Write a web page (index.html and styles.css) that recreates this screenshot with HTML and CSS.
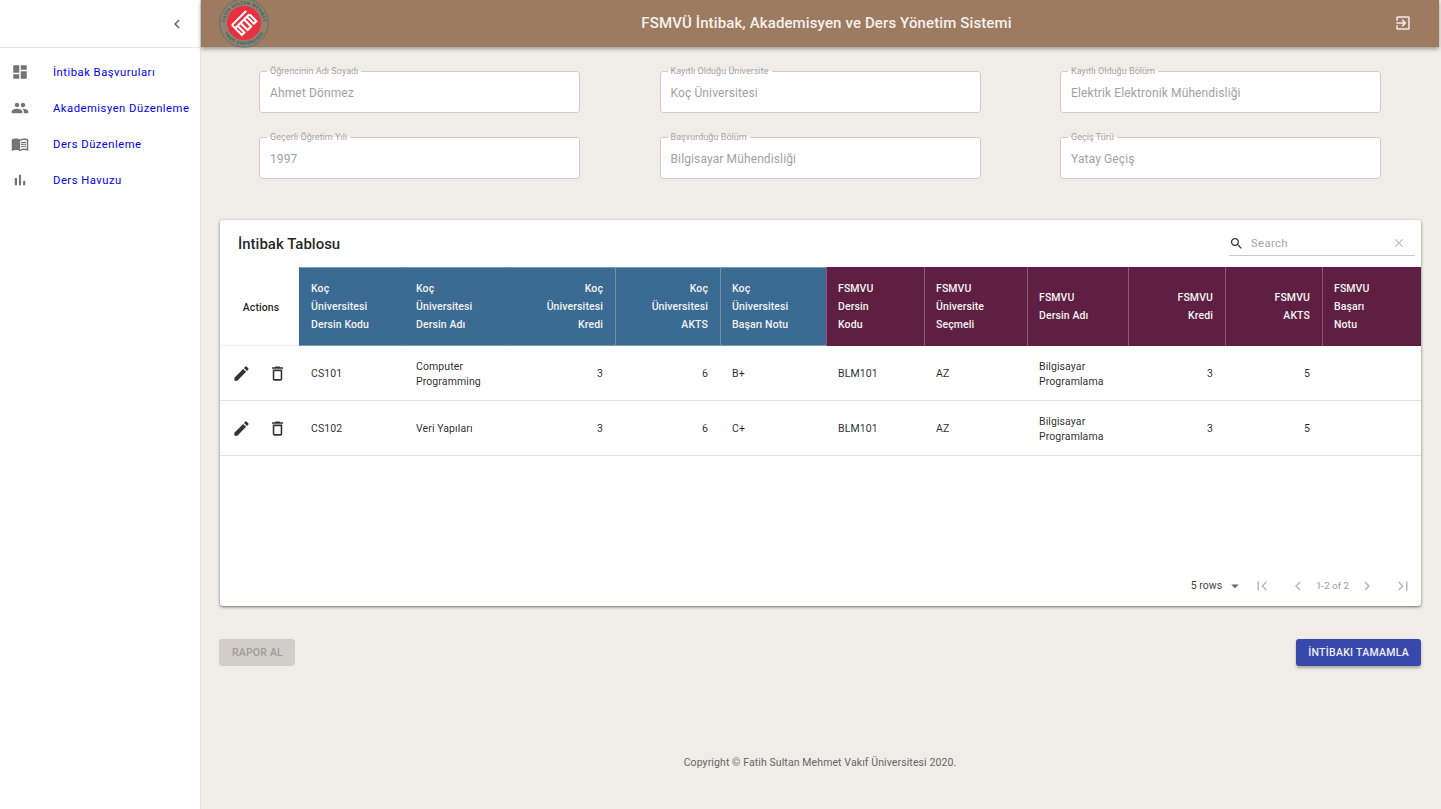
FILE: index.html
```html
<!DOCTYPE html>
<html lang="tr">
<head>
<meta charset="utf-8">
<title>FSMVÜ İntibak</title>
<link rel="stylesheet" href="styles.css">
</head>
<body>
<svg class="sprite" width="0" height="0">
  <defs>
    <symbol id="i-dash" viewBox="0 0 24 24"><path d="M3 13h8V3H3v10zm0 8h8v-6H3v6zm10 0h8V11h-8v10zm0-18v6h8V3h-8z"/></symbol>
    <symbol id="i-people" viewBox="0 0 24 24"><path d="M16 11c1.66 0 2.99-1.34 2.99-3S17.66 5 16 5c-1.66 0-3 1.34-3 3s1.34 3 3 3zm-8 0c1.66 0 2.99-1.34 2.99-3S9.66 5 8 5C6.34 5 5 6.34 5 8s1.34 3 3 3zm0 2c-2.33 0-7 1.17-7 3.5V19h14v-2.5c0-2.33-4.67-3.5-7-3.5zm8 0c-.29 0-.62.02-.97.05 1.16.84 1.97 1.97 1.97 3.45V19h6v-2.5c0-2.33-4.67-3.5-7-3.5z"/></symbol>
    <symbol id="i-book" viewBox="0 0 24 24"><path d="M21 5c-1.11-.35-2.33-.5-3.5-.5-1.95 0-4.05.4-5.5 1.5-1.45-1.1-3.55-1.5-5.5-1.5S2.45 4.9 1 6v14.65c0 .25.25.5.5.5.1 0 .15-.05.25-.05C3.1 20.45 5.05 20 6.5 20c1.95 0 4.05.4 5.5 1.5 1.35-.85 3.8-1.5 5.5-1.5 1.65 0 3.35.3 4.75 1.05.1.05.15.05.25.05.25 0 .5-.25.5-.5V6c-.6-.45-1.25-.75-2-1zm0 13.5c-1.1-.35-2.3-.5-3.5-.5-1.7 0-4.15.65-5.5 1.5V8c1.35-.85 3.8-1.5 5.5-1.5 1.2 0 2.4.15 3.5.5v11.5z"/><path d="M17.5 10.5c.88 0 1.73.09 2.5.26V9.24c-.79-.15-1.64-.24-2.5-.24-1.7 0-3.24.29-4.5.83v1.66c1.13-.64 2.7-.99 4.5-.99zM13 12.49v1.66c1.13-.64 2.7-.99 4.5-.99.88 0 1.73.09 2.5.26V11.9c-.79-.15-1.64-.24-2.5-.24-1.7 0-3.24.3-4.5.83zM17.5 14.33c-1.7 0-3.24.29-4.5.83v1.66c1.13-.64 2.7-.99 4.5-.99.88 0 1.73.09 2.5.26v-1.52c-.79-.16-1.64-.24-2.5-.24z"/></symbol>
    <symbol id="i-bar" viewBox="0 0 24 24"><path d="M5 9.2h3V19H5zM10.6 5h2.8v14h-2.8zm5.6 8H19v6h-2.8z"/></symbol>
    <symbol id="i-left" viewBox="0 0 24 24"><path d="M15.41 7.41L14 6l-6 6 6 6 1.41-1.41L10.83 12z"/></symbol>
    <symbol id="i-right" viewBox="0 0 24 24"><path d="M8.59 16.59L13.17 12 8.59 7.41 10 6l6 6-6 6z"/></symbol>
    <symbol id="i-edit" viewBox="0 0 24 24"><path d="M3 17.25V21h3.75L17.81 9.94l-3.75-3.75L3 17.25zM20.71 7.04c.39-.39.39-1.02 0-1.41l-2.34-2.34c-.39-.39-1.02-.39-1.41 0l-1.83 1.83 3.75 3.75 1.83-1.83z"/></symbol>
    <symbol id="i-trash" viewBox="0 0 24 24"><path d="M6 19c0 1.1.9 2 2 2h8c1.1 0 2-.9 2-2V7H6v12zM8 9h8v10H8V9zm7.5-5l-1-1h-5l-1 1H5v2h14V4z"/></symbol>
    <symbol id="i-search" viewBox="0 0 24 24"><path d="M15.5 14h-.79l-.28-.27C15.41 12.59 16 11.11 16 9.5 16 5.91 13.09 3 9.5 3S3 5.91 3 9.5 5.91 16 9.5 16c1.61 0 3.09-.59 4.23-1.57l.27.28v.79l5 4.99L20.49 19l-4.99-5zm-6 0C7.01 14 5 11.99 5 9.5S7.01 5 9.5 5 14 7.01 14 9.5 11.99 14 9.5 14z"/></symbol>
    <symbol id="i-clear" viewBox="0 0 24 24"><path d="M19 6.41L17.59 5 12 10.59 6.41 5 5 6.41 10.59 12 5 17.59 6.41 19 12 13.41 17.59 19 19 17.59 13.41 12z"/></symbol>
    <symbol id="i-exit" viewBox="0 0 24 24"><path d="M10.09 15.59L11.5 17l5-5-5-5-1.41 1.41L12.67 11H3v2h9.67l-2.58 2.59zM19 3H5c-1.11 0-2 .9-2 2v4h2V5h14v14H5v-4H3v4c0 1.1.89 2 2 2h14c1.1 0 2-.9 2-2V5c0-1.1-.9-2-2-2z"/></symbol>
    <symbol id="i-first" viewBox="0 0 24 24"><path d="M18.41 16.59L13.82 12l4.59-4.59L17 6l-6 6 6 6zM6 6h2v12H6z"/></symbol>
    <symbol id="i-last" viewBox="0 0 24 24"><path d="M5.59 7.41L10.18 12l-4.59 4.59L7 18l6-6-6-6zM16 6h2v12h-2z"/></symbol>
    <symbol id="i-drop" viewBox="0 0 24 24"><path d="M7 10l5 5 5-5z"/></symbol>
  </defs>
</svg>
<div class="app">
  <aside class="sidebar">
    <div class="side-top"><svg class="icon chevron"><use href="#i-left"/></svg></div>
    <nav class="menu">
      <a class="menu-item" href="#"><svg class="icon"><use href="#i-dash"/></svg><span>İntibak Başvuruları</span></a>
      <a class="menu-item" href="#"><svg class="icon"><use href="#i-people"/></svg><span>Akademisyen Düzenleme</span></a>
      <a class="menu-item" href="#"><svg class="icon"><use href="#i-book"/></svg><span>Ders Düzenleme</span></a>
      <a class="menu-item" href="#"><svg class="icon"><use href="#i-bar"/></svg><span>Ders Havuzu</span></a>
    </nav>
  </aside>
  <div class="main">
    <header class="topbar">
      <svg class="logo" viewBox="0 0 50 50">
        <circle cx="25" cy="25" r="24.2" fill="#96806a" stroke="#3f6f70" stroke-width="0.7"/>
        <defs>
          <path id="arc-top" d="M6.2 25a18.800 18.800 0 0 1 37.600 0"/>
          <path id="arc-bot" d="M3 25a22 22 0 0 0 44 0"/>
        </defs>
        <text class="logo-text"><textPath href="#arc-top" startOffset="50%" text-anchor="middle">FATİH SULTAN MEHMET</textPath></text>
        <text class="logo-text"><textPath href="#arc-bot" startOffset="50%" text-anchor="middle">VAKIF ÜNİVERSİTESİ</textPath></text>
        <circle cx="25" cy="25" r="17" fill="#e8303f"/>
        <g fill="none" stroke="#fff" stroke-width="2.1" transform="rotate(-45 25 25)">
          <path d="M15 18h20M15 22.500h20M15 18v14h3.500v-9.500M22.500 23v9.500h5V23M31.500 23v9.500h3.500V23"/>
        </g>
      </svg>
      <h1 class="app-title">FSMVÜ İntibak, Akademisyen ve Ders Yönetim Sistemi</h1>
      <svg class="icon exit"><use href="#i-exit"/></svg>
    </header>
    <main class="content">
      <section class="fields">
        <fieldset class="field"><legend>Öğrencinin Adı Soyadı</legend><span>Ahmet Dönmez</span></fieldset>
        <fieldset class="field"><legend>Kayıtlı Olduğu Üniversite</legend><span>Koç Üniversitesi</span></fieldset>
        <fieldset class="field"><legend>Kayıtlı Olduğu Bölüm</legend><span>Elektrik Elektronik Mühendisliği</span></fieldset>
        <fieldset class="field"><legend>Geçerli Öğretim Yılı</legend><span>1997</span></fieldset>
        <fieldset class="field"><legend>Başvurduğu Bölüm</legend><span>Bilgisayar Mühendisliği</span></fieldset>
        <fieldset class="field"><legend>Geçiş Türü</legend><span>Yatay Geçiş</span></fieldset>
      </section>
      <section class="card">
        <div class="card-head">
          <h2 class="card-title">İntibak Tablosu</h2>
          <div class="search">
            <svg class="icon search-icon"><use href="#i-search"/></svg>
            <span class="search-text">Search</span>
            <svg class="icon clear"><use href="#i-clear"/></svg>
          </div>
        </div>
        <table class="grid">
          <colgroup>
            <col class="w79"><col class="w105"><col class="w105"><col class="w106"><col class="w105"><col class="w106"><col class="w98"><col class="w103"><col class="w101"><col class="w97"><col class="w97"><col class="w99">
          </colgroup>
          <thead>
            <tr>
              <th class="act-head">Actions</th>
              <th class="blue plain">Koç<br>Üniversitesi<br>Dersin Kodu</th>
              <th class="blue plain">Koç<br>Üniversitesi<br>Dersin Adı</th>
              <th class="blue plain num">Koç<br>Üniversitesi<br>Kredi</th>
              <th class="blue num">Koç<br>Üniversitesi<br>AKTS</th>
              <th class="blue">Koç<br>Üniversitesi<br>Başarı Notu</th>
              <th class="wine">FSMVU<br>Dersin<br>Kodu</th>
              <th class="wine">FSMVU<br>Üniversite<br>Seçmeli</th>
              <th class="wine">FSMVU<br>Dersin Adı</th>
              <th class="wine num">FSMVU<br>Kredi</th>
              <th class="wine num">FSMVU<br>AKTS</th>
              <th class="wine">FSMVU<br>Başarı<br>Notu</th>
            </tr>
          </thead>
          <tbody>
            <tr>
              <td class="actions"><div class="act-wrap"><svg class="icon act"><use href="#i-edit"/></svg><svg class="icon act"><use href="#i-trash"/></svg></div></td>
              <td>CS101</td><td>Computer<br>Programming</td><td class="num">3</td><td class="num">6</td><td>B+</td>
              <td>BLM101</td><td>AZ</td><td>Bilgisayar<br>Programlama</td><td class="num">3</td><td class="num">5</td><td></td>
            </tr>
            <tr>
              <td class="actions"><div class="act-wrap"><svg class="icon act"><use href="#i-edit"/></svg><svg class="icon act"><use href="#i-trash"/></svg></div></td>
              <td>CS102</td><td>Veri Yapıları</td><td class="num">3</td><td class="num">6</td><td>C+</td>
              <td>BLM101</td><td>AZ</td><td>Bilgisayar<br>Programlama</td><td class="num">3</td><td class="num">5</td><td></td>
            </tr>
          </tbody>
        </table>
        <div class="pager">
          <span class="rows">5 rows</span>
          <svg class="icon drop"><use href="#i-drop"/></svg>
          <svg class="icon pg first"><use href="#i-first"/></svg>
          <svg class="icon pg prev"><use href="#i-left"/></svg>
          <span class="range">1-2 of 2</span>
          <svg class="icon pg next"><use href="#i-right"/></svg>
          <svg class="icon pg last"><use href="#i-last"/></svg>
        </div>
      </section>
      <div class="buttons">
        <button class="btn disabled" type="button">RAPOR AL</button>
        <button class="btn primary" type="button">İNTİBAKI TAMAMLA</button>
      </div>
      <footer class="copy">Copyright © Fatih Sultan Mehmet Vakıf Üniversitesi 2020.</footer>
    </main>
  </div>
</div>
</body>
</html>
```
FILE: styles.css
```css
* { box-sizing: border-box; }
html, body { margin: 0; height: 100%; }
body { font-family: Roboto, "Liberation Sans", sans-serif; background: #fff; color: rgba(0,0,0,.87); overflow: hidden; }
.sprite { display: block; position: absolute; }
.icon { display: block; width: 18px; height: 18px; fill: currentColor; flex: none; }

.app { display: flex; height: 809px; width: 1441px; }

.sidebar { width: 201px; flex: none; background: #fff; border-right: 1px solid #e4e2df; }
.side-top { height: 48px; display: flex; align-items: center; justify-content: flex-end; padding-right: 14px; border-bottom: 1px solid #e8e8e8; color: #666; }
.menu { display: flex; flex-direction: column; padding-top: 6px; }
.menu-item { display: flex; align-items: center; height: 36px; color: #0000ee; text-decoration: none; font-size: 11.25px; letter-spacing: .5px; padding-left: 11px; }
.menu-item .icon { color: #757575; margin-right: 24px; }

.main { flex: 1; display: flex; flex-direction: column; background: #f0ede8; }
.topbar { height: 47px; flex: none; margin-right: 2px; background: #9c7b60; color: #fff; display: flex; align-items: center; padding: 0 27px 0 18px; box-shadow: 0 2px 4px rgba(0,0,0,.35); position: relative; z-index: 1; }
.logo { width: 50px; height: 50px; flex: none; margin-top: -2px; }
.logo-text { font: 700 4.4px "Open Sans", sans-serif; fill: #2c6a70; letter-spacing: .25px; }
.app-title { flex: 1; margin: 0; padding: 0 10px 2px 0; text-align: center; font-size: 15px; font-weight: 500; letter-spacing: .12px; color: #f5f1ec; }
.exit { color: #f2ece6; margin-top: -1px; }

.content { flex: 1; display: flex; flex-direction: column; padding: 20px 20px 0 18px; }
.fields { display: grid; grid-template-columns: repeat(3, 321px); row-gap: 20px; column-gap: 79.5px; padding: 0 40px; }
.field { margin: 0; min-width: 0; height: 46px; background: #fff; border: 1px solid #cfcdca; border-radius: 3px; padding: 0 10px; display: flex; align-items: center; }
.field legend { font-size: 9px; line-height: 8px; height: 8px; padding: 0 3px; margin-left: -3px; color: #a3a3a3; letter-spacing: .05px; }
.field span { font-size: 12px; letter-spacing: .12px; color: #a2a2a2; margin-bottom: 2px; }

.card { margin: 41px 0 0 1px; width: 1201px; height: 386px; background: #fff; border-radius: 3px; box-shadow: 0 1px 3px rgba(0,0,0,.55); display: flex; flex-direction: column; }
.card-head { height: 47px; flex: none; display: flex; align-items: center; justify-content: space-between; padding: 0 6px 0 18px; }
.card-title { margin: 0; font-size: 15px; font-weight: 500; }
.search { width: 186px; height: 25px; border-bottom: 1px solid #c9c9c9; display: flex; align-items: center; padding-right: 9px; }
.search-icon { width: 15px; height: 15px; color: #333; }
.search-text { flex: 1; font-size: 11.25px; letter-spacing: .4px; color: #a5a5a5; margin-left: 7px; }
.clear { width: 14px; height: 14px; color: #bdbdbd; }

.grid { border-collapse: separate; border-spacing: 0; table-layout: fixed; width: 1201px; font-size: 10.5px; letter-spacing: .1px; }
.w79 { width: 79px; } .w97 { width: 97px; } .w98 { width: 98px; } .w99 { width: 99px; } .w101 { width: 101px; } .w103 { width: 103px; } .w105 { width: 105px; } .w106 { width: 106px; }
.grid th { height: 79px; padding: 0 12px 0 11px; border-left: 1px solid transparent; font-weight: 500; line-height: 18px; text-align: left; color: #f3f3f3; }
.grid th.act-head { color: rgba(0,0,0,.87); text-align: center; padding: 4px 0 0 2px; border-bottom: 1px solid #f1f1f1; }
.grid th.blue { background: #3b6a92; border-top: 1px solid #7d9cb6; border-bottom: 1px solid #7d9cb6; border-left-color: #6f92ae; }
.grid th.plain { border-left-color: transparent; }
.grid th.wine { background: #5e1f42; border-left-color: #8a5a74; }
.grid th.num, .grid td.num { text-align: right; }
.grid td { height: 55px; padding: 1px 12px 0; line-height: 15px; border-bottom: 1px solid #e4e4e4; color: rgba(0,0,0,.85); }
.grid td.actions { padding: 0; }
.act-wrap { display: flex; justify-content: space-between; padding: 0 12px; }
.act { width: 19px; height: 19px; color: #333; }

.pager { flex: 1; display: flex; align-items: flex-end; justify-content: flex-end; padding: 0 9px 11px 0; font-size: 10.5px; letter-spacing: .1px; }
.rows { color: #444; line-height: 18px; letter-spacing: 0; }
.drop { color: #666; margin-left: 4px; }
.pg { color: #b8b8b8; }
.first { margin-left: 9px; }
.prev { margin-left: 18px; }
.range { color: #9c9c9c; margin: 0 9px; line-height: 18px; font-size: 9.75px; letter-spacing: 0; }
.last { margin-left: 18px; }

.buttons { display: flex; justify-content: space-between; margin-top: 33px; width: 1202px; }
.btn { height: 27px; border: 0; border-radius: 3px; font-family: inherit; font-size: 10.5px; font-weight: 500; }
.disabled { background: #d1ceca; color: #9f9c99; letter-spacing: .2px; padding: 0 12px 0 13px; }
.primary { background: #3949ab; color: #eef; letter-spacing: .28px; padding: 0 12px; box-shadow: 0 2px 3px rgba(0,0,0,.3); }

.copy { margin-top: 91px; text-align: center; font-size: 10.5px; letter-spacing: .1px; color: #666; line-height: 12px; }
```
